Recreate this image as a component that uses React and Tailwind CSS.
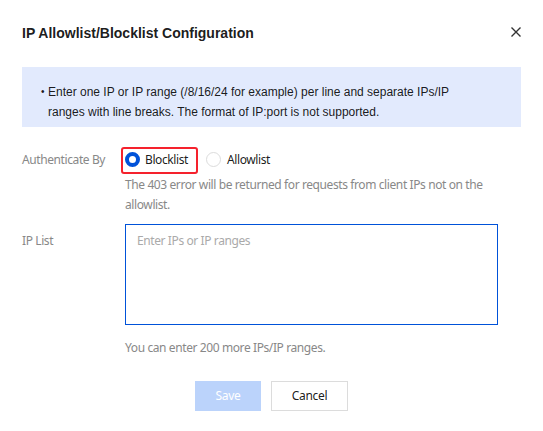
import React from "react";

export default function App() {
  const form = { fontFamily: '"Noto Sans", "Open Sans", sans-serif' };
  const arial = { fontFamily: '"Liberation Sans", Arial, sans-serif' };
  return (
    <div className="w-[543px] h-[431px] bg-white relative overflow-hidden">
      {/* header */}
      <div className="flex items-center justify-between pl-[22px] pr-[21px] pt-[22px] h-[43px]">
        <div className="text-[14px] font-bold text-[#000000e6] leading-[20px]" style={arial}>
          IP Allowlist/Blocklist Configuration
        </div>
        <svg width="12" height="12" viewBox="0 0 12 12" className="mt-[-2px]">
          <path d="M1.5 1.5 L10.5 10.5 M10.5 1.5 L1.5 10.5" stroke="#333" strokeWidth="1.4" />
        </svg>
      </div>

      {/* info box */}
      <div className="mx-[22px] mt-[24px] h-[60px] bg-[#e2eafd] pt-[15px] pl-[19px] pr-[20px]" style={arial}>
        <div className="flex text-[12px] leading-[20px] text-[#000000e6]">
          <span className="w-[7px] shrink-0 text-[10px]">•</span>
          <span>
            Enter one IP or IP range (/8/16/24 for example) per line and separate IPs/IP
            <br />
            ranges with line breaks. The format of IP:port is not supported.
          </span>
        </div>
      </div>

      {/* form */}
      <div className="px-[22px] mt-[19px] text-[12px] tracking-[-0.4px]" style={form}>
        <div className="flex">
          <div className="w-[103px] shrink-0 leading-[27px] text-[#888888]">Authenticate By</div>
          <div className="flex flex-col">
            <div className="flex items-center h-[27px]">
              <div className="relative flex items-center">
                <div className="absolute left-[-4.5px] right-[-10px] top-[-4px] bottom-[-5px] border-2 border-[#f5222d] rounded-[3px]" />
                <span className="w-[15px] h-[15px] rounded-full border-[4px] border-[#0052d9] bg-white box-border" />
                <span className="ml-[5px] text-[#000000e6] leading-[18px]">Blocklist</span>
              </div>
              <div className="flex items-center ml-[18px]">
                <span className="w-[15px] h-[15px] rounded-full border border-[#dcdcdc] bg-white box-border" />
                <span className="ml-[6px] text-[#000000e6] leading-[18px]">Allowlist</span>
              </div>
            </div>
            <div className="text-[#888888] leading-[19.5px] mt-[2px]">
              The 403 error will be returned for requests from client IPs not on the
              <br />
              allowlist.
            </div>
          </div>
        </div>

        <div className="flex mt-[10px]">
          <div className="w-[103px] shrink-0 text-[#888888] leading-[18px] pt-[8px]">IP List</div>
          <div className="flex flex-col">
            <div className="w-[373px] h-[101px] border border-[#0052d9] px-[11px] pt-[7px] text-[#aaaaaa] leading-[18px]">
              Enter IPs or IP ranges
            </div>
            <div className="text-[#888888] leading-[18px] mt-[14px]">
              You can enter 200 more IPs/IP ranges.
            </div>
          </div>
        </div>
      </div>

      {/* footer */}
      <div className="flex justify-center gap-[10px] mt-[24px] text-[12px] tracking-[-0.3px]" style={form}>
        <div className="w-[66px] h-[30px] bg-[#bbd3fb] text-white flex items-center justify-center">Save</div>
        <div className="w-[77px] h-[30px] border border-[#dcdcdc] text-[#000000e6] flex items-center justify-center">Cancel</div>
      </div>
    </div>
  );
}
